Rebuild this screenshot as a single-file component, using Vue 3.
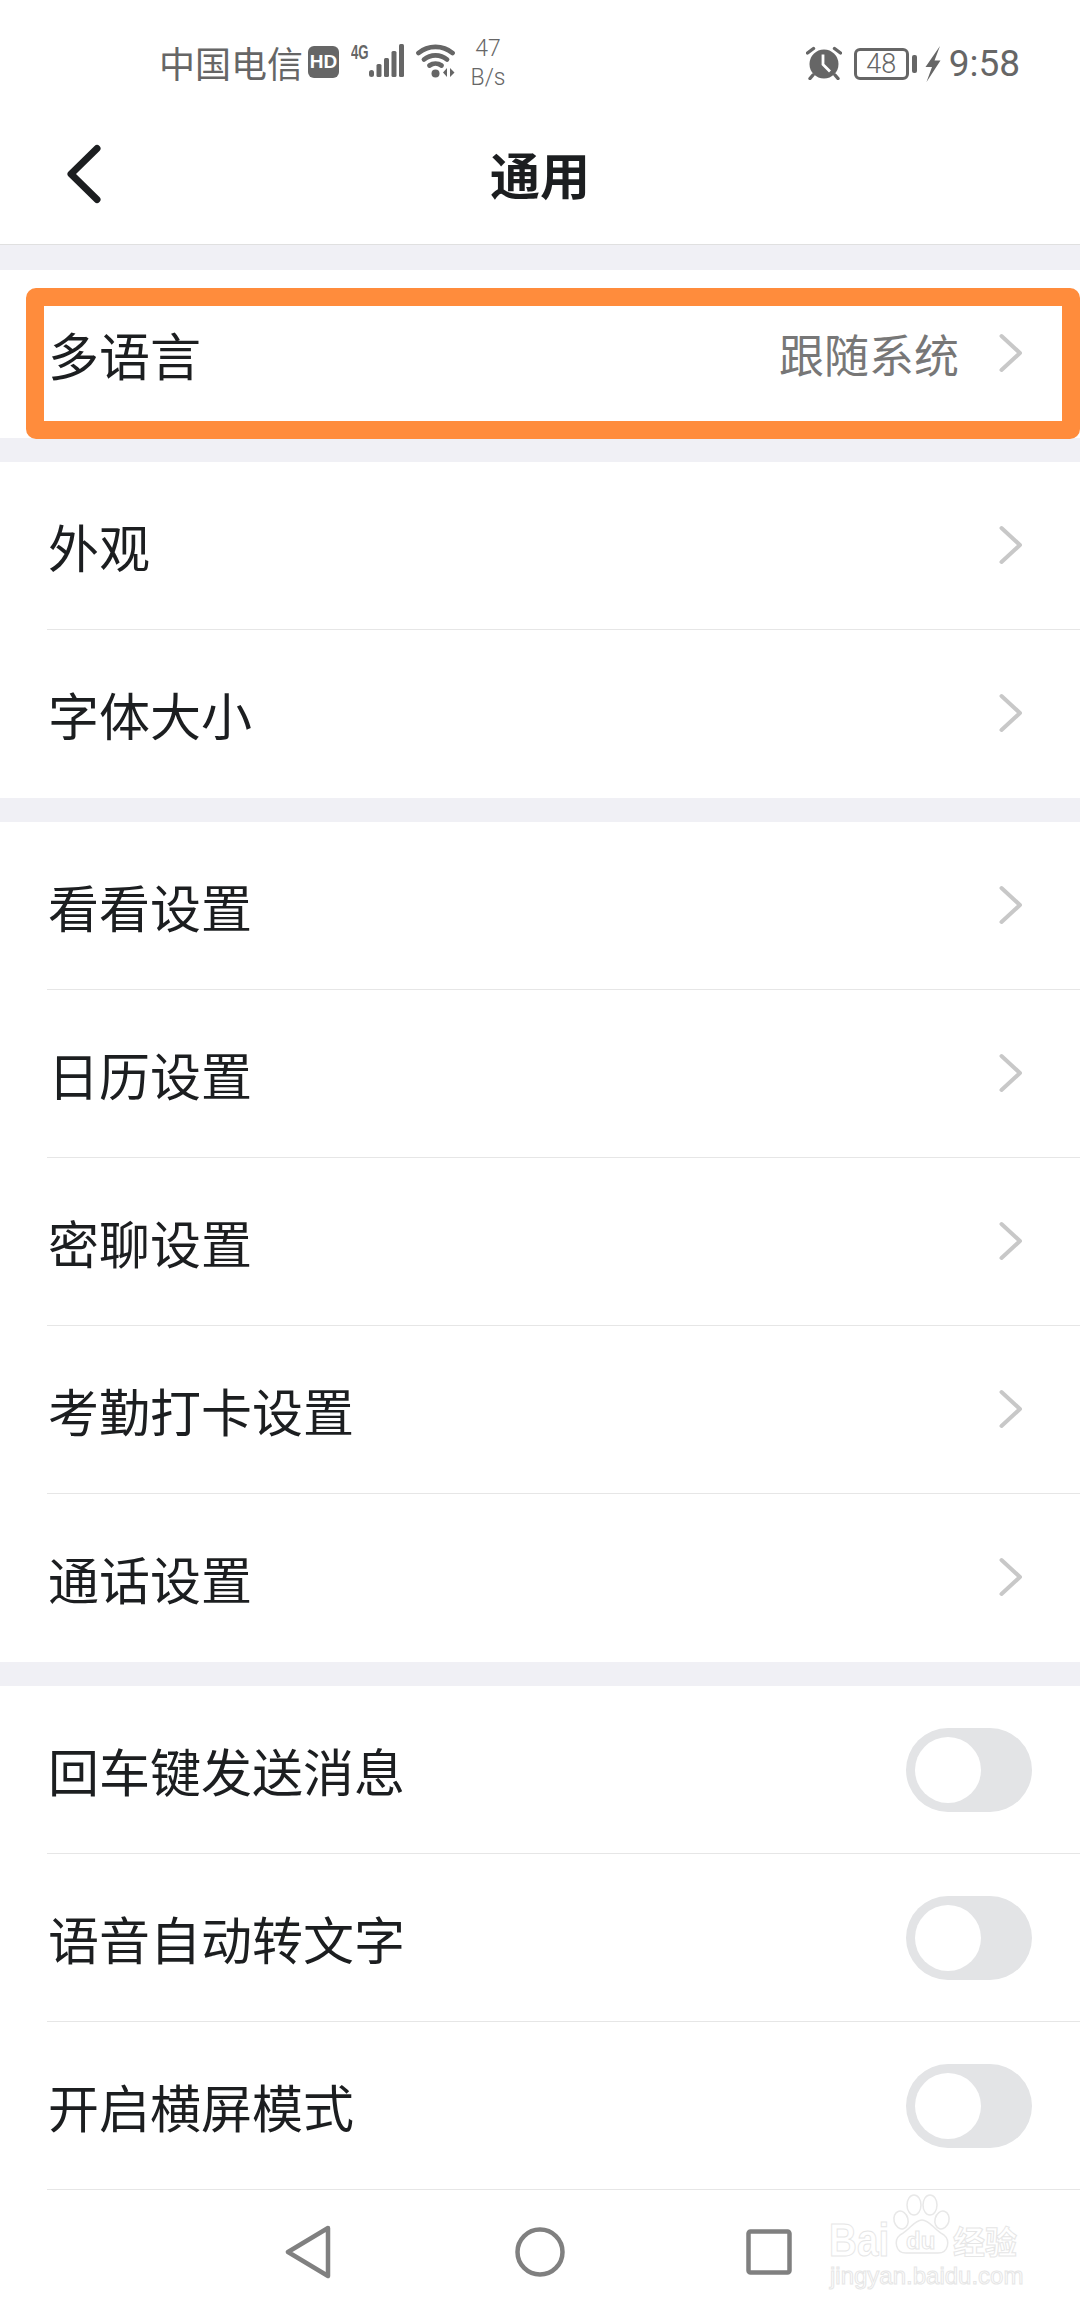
<script setup>
const groups = [
  { items: ['外观', '字体大小'] },
  { items: ['看看设置', '日历设置', '密聊设置', '考勤打卡设置', '通话设置'] },
]
const toggles = ['回车键发送消息', '语音自动转文字', '开启横屏模式']
</script>

<template>
  <div class="page">
    <div class="status">
      <div class="status-left">
        <span class="carrier">中国电信</span>
        <span class="hd">HD</span>
        <span class="net">4G</span>
        <svg class="signal" width="36" height="34" viewBox="0 0 36 34">
          <g fill="#666">
            <rect x="0" y="26" width="5" height="7" rx="2.500" />
            <rect x="7.500" y="20" width="5" height="13" rx="1.500" />
            <rect x="15" y="14" width="5" height="19" rx="1.500" />
            <rect x="22.500" y="7" width="5" height="26" rx="1.500" />
            <rect x="30" y="0" width="5" height="33" rx="1.500" />
          </g>
        </svg>
        <svg class="wifi" width="40" height="34" viewBox="0 0 40 34">
          <g fill="none" stroke="#666" stroke-width="4.800" stroke-linecap="round">
            <path d="M2.500 9C12 0.800 27 0.800 36.500 9" />
            <path d="M8 15.500C14.500 10 24.500 10 31 15.500" />
            <path d="M13.500 21.500C17 19 22 19 25.500 21.500" />
          </g>
          <circle cx="19.500" cy="29.500" r="4" fill="#666" />
          <path d="M31 24v9l-4-4.500zM34 24l4.500 4.500-4.500 4.500z" fill="#666" />
        </svg>
        <span class="speed"><span>47</span><span>B/s</span></span>
      </div>
      <div class="status-right">
        <svg class="alarm" width="36" height="34" viewBox="0 0 36 34">
          <circle cx="18" cy="18" r="14.500" fill="#666" />
          <path d="M17 8.500v10l7 7" fill="none" stroke="#fff" stroke-width="2.800" />
          <path d="M1.500 7l6-4.500M34.500 7l-6-4.500M7 29l-3 3.500M29 29l3 3.500" fill="none" stroke="#666" stroke-width="3.400" stroke-linecap="round" />
        </svg>
        <span class="battery"><span class="battery-num">48</span></span>
        <span class="battery-cap"></span>
        <svg class="bolt" width="16" height="36" viewBox="0 0 16 36">
          <path d="M15 0L0.500 21h6.500L1.500 36L15.500 14.500H9.500L15 0z" fill="#666" />
        </svg>
        <span class="time">9:58</span>
      </div>
    </div>

    <header class="header">
      <svg class="back" width="36" height="60" viewBox="0 0 36 60">
        <path d="M32 4.500L6 30L32 55.500" fill="none" stroke="#1c1e20" stroke-width="7" stroke-linecap="round" stroke-linejoin="round" />
      </svg>
      <h1 class="title">通用</h1>
    </header>

    <main class="list">
      <section class="group">
        <div class="row row-first">
          <span class="label">多语言</span>
          <span class="value">跟随系统</span>
          <svg class="chev" width="24" height="40" viewBox="0 0 24 40">
            <path d="M2.500 3L21 20L2.500 37" fill="none" stroke="#c8c8c8" stroke-width="4" stroke-linecap="round" stroke-linejoin="round" />
          </svg>
          <div class="highlight"></div>
        </div>
      </section>

      <section v-for="(g, i) in groups" :key="i" class="group">
        <div v-for="item in g.items" :key="item" class="row">
          <span class="label">{{ item }}</span>
          <svg class="chev" width="24" height="40" viewBox="0 0 24 40">
            <path d="M2.500 3L21 20L2.500 37" fill="none" stroke="#c8c8c8" stroke-width="4" stroke-linecap="round" stroke-linejoin="round" />
          </svg>
        </div>
      </section>

      <section class="group group-last">
        <div v-for="item in toggles" :key="item" class="row">
          <span class="label">{{ item }}</span>
          <span class="toggle"><span class="thumb"></span></span>
        </div>
      </section>
    </main>

    <nav class="nav">
      <svg width="46" height="54" viewBox="0 0 46 54" class="nav-back">
        <path d="M43 3L3 27L43 51Z" fill="none" stroke="#808080" stroke-width="4.500" stroke-linejoin="round" />
      </svg>
      <svg width="50" height="50" viewBox="0 0 50 50" class="nav-home">
        <circle cx="25" cy="25" r="22.500" fill="none" stroke="#808080" stroke-width="4.500" />
      </svg>
      <svg width="46" height="46" viewBox="0 0 46 46" class="nav-recent">
        <rect x="2.500" y="2.500" width="41" height="41" rx="2" fill="none" stroke="#808080" stroke-width="4.500" />
      </svg>
      <div class="watermark">
        <svg class="paw" width="60" height="62" viewBox="0 0 60 62">
          <g fill="#fff" stroke="#e8e8e8" stroke-width="1.500">
            <ellipse cx="9" cy="26" rx="7" ry="9" transform="rotate(-15 9 26)" />
            <ellipse cx="22" cy="11" rx="7" ry="10" />
            <ellipse cx="38" cy="11" rx="7" ry="10" />
            <ellipse cx="50" cy="26" rx="7" ry="9" transform="rotate(15 50 26)" />
            <path d="M30 26C22 26 18 36 8 41C2 46 3 59 14 59C22 59 38 59 46 59C57 59 58 46 52 41C42 36 38 26 30 26Z" />
          </g>
        </svg>
        <div class="wm-bai">Bai</div>
        <div class="wm-du">du</div>
        <div class="wm-cn">经验</div>
        <div class="wm-line2">jingyan.baidu.com</div>
      </div>
    </nav>
  </div>
</template>

<style>
html, body { margin: 0; background: #fff; }
</style>

<style scoped>
.page {
  width: 1080px;
  height: 2310px;
  overflow: hidden;
  display: flex;
  flex-direction: column;
  background: #f0f0f5;
  font-family: "Noto Sans CJK SC", "Noto Sans", sans-serif;
  color: #1c1e20;
}
.status {
  height: 120px;
  flex: none;
  display: flex;
  justify-content: space-between;
  align-items: center;
  padding: 4px 60px 0 159px;
  background: #fff;
  color: #666;
  box-sizing: border-box;
}
.status-left, .status-right { display: flex; align-items: center; }
.status-right { margin-top: 3px; }
.carrier { font-size: 36px; line-height: 44px; width: 144px; white-space: nowrap; }
.hd {
  width: 31px;
  height: 32px;
  margin-left: 5px;
  border-radius: 6px;
  background: #666;
  color: #fff;
  font: 700 19px/32px "Liberation Sans", sans-serif;
  text-align: center;
}
.net {
  font: 700 20px/16px "Liberation Sans", sans-serif;
  margin: -20px 0 0 12px;
  width: 18px;
  transform: scaleX(0.66);
  transform-origin: left;
}
.signal { flex: none; margin-top: -2px; }
.wifi { flex: none; margin-left: 11px; margin-top: -2px; }
.speed {
  display: flex;
  flex-direction: column;
  align-items: center;
  margin: 2px 0 0 11px;
  font: 300 23px/29px Roboto, sans-serif;
  width: 42px;
}
.alarm { flex: none; margin-top: -2px; }
.battery {
  width: 55px;
  height: 32px;
  margin-left: 12px;
  box-sizing: border-box;
  border: 3.500px solid #666;
  border-radius: 6px;
  display: flex;
  align-items: center;
  justify-content: center;
  font: 300 27px/32px Roboto, sans-serif;
}
.battery-cap {
  width: 5px;
  height: 18px;
  margin-left: 3px;
  background: #666;
  border-radius: 2px;
}
.bolt { flex: none; margin-left: 8px; }
.time { margin-left: 8px; font: 37px/44px Roboto, sans-serif; }
.header {
  height: 125px;
  flex: none;
  display: flex;
  align-items: center;
  justify-content: center;
  position: relative;
  background: #fff;
  border-bottom: 1px solid #e0e0e0;
  box-sizing: border-box;
}
.back { position: absolute; left: 65px; top: 24px; }
.title { margin: 0; font-size: 50px; font-weight: 700; line-height: 60px; position: relative; top: -9px; }
.list {
  flex: 1;
  min-height: 0;
  padding-top: 25px;
  display: flex;
  flex-direction: column;
  gap: 24px;
}
.group { background: #fff; flex: none; }
.row {
  height: 168px;
  box-sizing: border-box;
  margin-left: 47px;
  padding-right: 57px;
  display: flex;
  align-items: center;
  border-bottom: 1px solid #e6e6e6;
  position: relative;
}
.group:not(.group-last) .row:last-child { border-bottom: 0; }
.group-last .row { padding-right: 48px; }
.label { font-size: 51px; line-height: 60px; flex: 1; padding-left: 1px; }
.value { font-size: 45px; line-height: 56px; color: #777; margin-right: 40px; }
.chev { position: relative; top: -1px; }
.highlight {
  position: absolute;
  left: -21px;
  top: 18px;
  height: 151px;
  width: 1054px;
  box-sizing: border-box;
  border: 18px solid #ff8c3c;
  border-radius: 10px;
}
.toggle {
  width: 126px;
  height: 84px;
  border-radius: 42px;
  background: #e3e4e6;
  padding: 9px;
  box-sizing: border-box;
}
.thumb { display: block; width: 66px; height: 66px; border-radius: 50%; background: #fff; }
.nav {
  height: 120px;
  flex: none;
  position: relative;
  background: #fff;
}
.nav-back { position: absolute; left: 285px; top: 35px; }
.nav-home { position: absolute; left: 515px; top: 37px; }
.nav-recent { position: absolute; left: 746px; top: 39px; }
.watermark {
  position: absolute;
  left: 0;
  top: 0;
  width: 1080px;
  height: 120px;
  color: #fff;
  -webkit-text-stroke: 1px #e6e6e6;
  white-space: nowrap;
}
.paw { position: absolute; left: 892px; top: 4px; }
.wm-bai {
  position: absolute;
  left: 829px;
  top: 28px;
  font: 700 46px/44px "Liberation Sans", sans-serif;
  transform: scaleX(0.84);
  transform-origin: left;
}
.wm-du { position: absolute; left: 906px; top: 38px; font: 700 24px/26px "Liberation Sans", sans-serif; }
.wm-cn { position: absolute; left: 953px; top: 30px; font: 700 32px/40px "Noto Sans CJK SC", sans-serif; }
.wm-line2 { position: absolute; left: 830px; top: 72px; font: 24px/28px "Liberation Sans", sans-serif; }
</style>
